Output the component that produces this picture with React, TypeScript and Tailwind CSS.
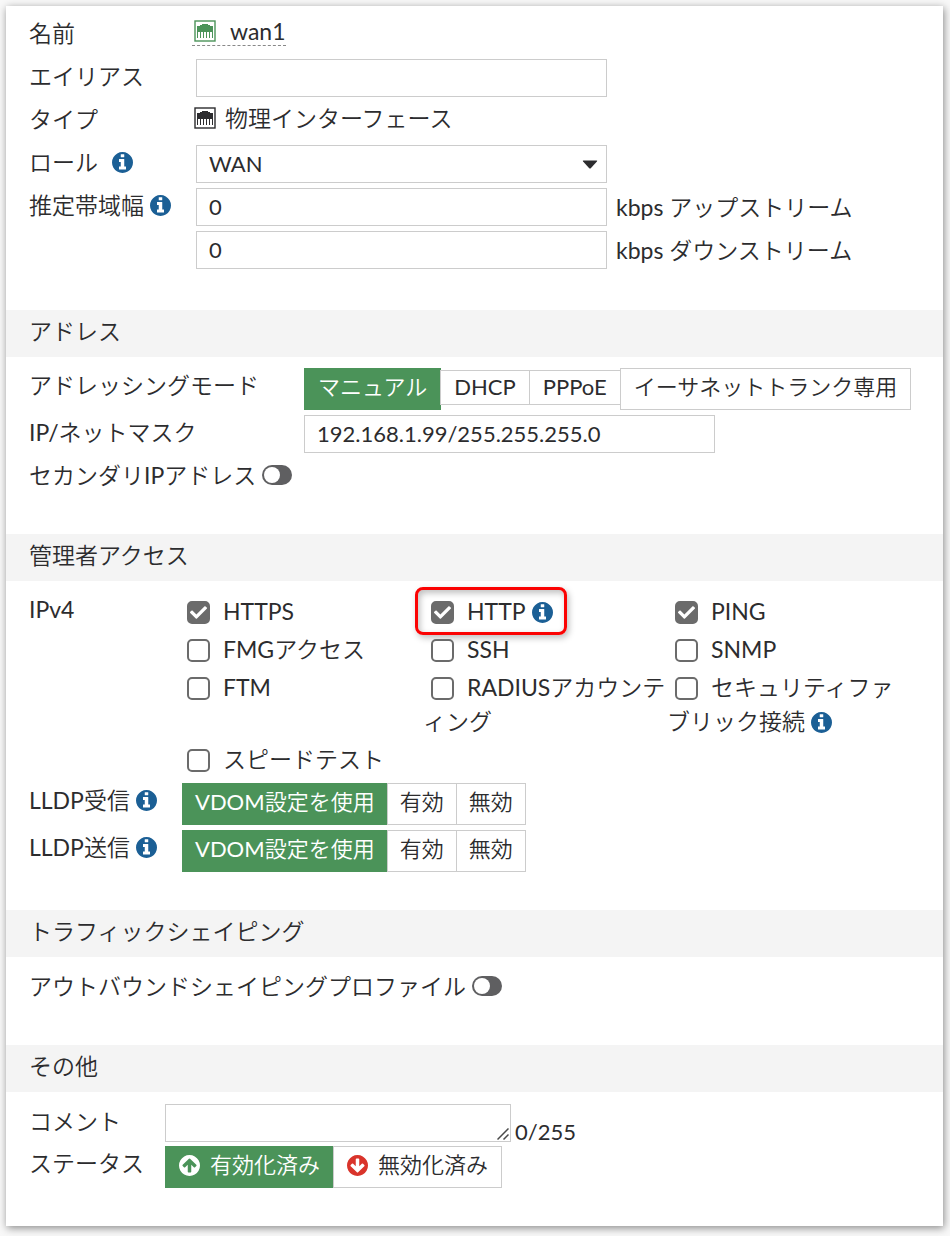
import type { ReactNode } from "react";
import { FaCheck } from "react-icons/fa";

function PortIcon({ className }: { className: string }) {
  return (
    <svg viewBox="0 0 22 22" aria-hidden="true" className={`size-[22px] shrink-0 ${className}`}>
      <rect x="1" y="1" width="20" height="20" fill="none" stroke="currentColor" strokeWidth="1.400" />
      <path
        fill="currentColor"
        d="M3 6h3V5h2V4h6v1h2v1h3v12h-1v-6h-2v6h-1v-6h-2v6h-1v-6h-2v6H9v-6H7v6H6v-6H4v6H3z"
      />
    </svg>
  );
}

function ArrowCircle({ className }: { className: string }) {
  return (
    <svg viewBox="0 0 1536 1536" aria-hidden="true" className={`size-[21px] shrink-0 fill-current ${className}`}>
      <path d="M1284 767q0-27-18-45l-362-362-91-91q-18-18-45-18t-45 18l-91 91-362 362q-18 18-18 45t18 45l91 91q18 18 45 18t45-18l189-189v502q0 26 19 45t45 19h128q26 0 45-19t19-45v-502l189 189q19 19 45 19t45-19l91-91q18-18 18-45zm252 1q0 209-103 385.500t-279.500 279.500-385.500 103-385.500-103-279.500-279.500-103-385.500 103-385.500 279.500-279.500 385.500-103 385.500 103 279.500 279.500 103 385.500z" />
    </svg>
  );
}

function Info({ label }: { label: string }) {
  return (
    <button type="button" aria-label={label} className="inline-flex align-[-3px] text-[#1b5f95]">
      <svg viewBox="0 0 1536 1536" aria-hidden="true" className="size-[21px] fill-current">
        <path d="M1024 1248v-160q0-14-9-23t-23-9h-96v-512q0-14-9-23t-23-9h-320q-14 0-23 9t-9 23v160q0 14 9 23t23 9h96v320h-96q-14 0-23 9t-9 23v160q0 14 9 23t23 9h448q14 0 23-9t9-23zm-128-896v-160q0-14-9-23t-23-9h-192q-14 0-23 9t-9 23v160q0 14 9 23t23 9h192q14 0 23-9t9-23zm640 416q0 209-103 385.500t-279.500 279.500-385.500 103-385.500-103-279.500-279.500-103-385.500 103-385.500 279.500-279.500 385.500-103 385.500 103 279.500 279.500 103 385.500z" />
      </svg>
    </button>
  );
}

function SectionTitle({ children }: { children: ReactNode }) {
  return (
    <h2 className="h-[47px] bg-[#f4f4f4] px-[23px] pb-1 leading-[43px]">{children}</h2>
  );
}

function Row({
  width,
  label,
  children,
}: {
  width: string;
  label: ReactNode;
  children?: ReactNode;
}) {
  return (
    <div className="flex min-h-[38px] items-start">
      <div className={`${width} flex shrink-0 items-center gap-[6px] whitespace-nowrap leading-[34px]`}>
        {label}
      </div>
      {children}
    </div>
  );
}

const field =
  "h-[38px] w-[411px] max-w-full border border-[#cccccc] bg-white px-3 pb-[2px] text-[22px] outline-none";

type Option = { text: string; latin?: boolean; icon?: ReactNode };

function Segmented({
  label,
  options,
  compact = false,
}: {
  label: string;
  options: Option[];
  compact?: boolean;
}) {
  return (
    <div role="group" aria-label={label} className="flex items-baseline text-[22px]">
      {options.map((option, i) => (
        <button
          key={option.text}
          type="button"
          aria-pressed={i === 0}
          className={`inline-flex items-center gap-[10px] whitespace-nowrap border leading-[30px] ${
            option.latin ? "h-[35px]" : "h-[42px] pb-1"
          } ${compact ? "px-3" : "px-[13px]"} ${
            i === 0
              ? "border-[#4b9359] bg-[#4b9359] text-white"
              : "-ml-px border-[#cccccc] bg-white"
          }`}
        >
          {option.icon}
          {option.text}
        </button>
      ))}
    </div>
  );
}

function Toggle({ id }: { id: string }) {
  return (
    <span className="relative inline-flex">
      <input
        id={id}
        type="checkbox"
        role="switch"
        className="peer h-5 w-[30px] appearance-none rounded-full bg-[#5f5f61]"
      />
      <span className="pointer-events-none absolute left-[2px] top-[2px] size-4 rounded-full bg-white peer-checked:left-3" />
    </span>
  );
}

function Access({
  text,
  checked = false,
  info = false,
  highlight = false,
}: {
  text: string;
  checked?: boolean;
  info?: boolean;
  highlight?: boolean;
}) {
  return (
    <div>
      <span className={highlight ? "relative inline-block" : ""}>
        <label>
          <span className="relative ml-2 mr-[13px] inline-block size-[23px] align-[-4px]">
            <input
              type="checkbox"
              defaultChecked={checked}
              className="peer block size-[23px] appearance-none rounded-[5px] border-2 border-[#6b6b6b] bg-white checked:bg-[#6b6b6b]"
            />
            <FaCheck className="pointer-events-none absolute left-[3px] top-[3px] hidden size-[17px] text-white peer-checked:block" />
          </span>
          {text}
        </label>
        {info && (
          <span className="ml-[6px]">
            <Info label={`${text}の説明`} />
          </span>
        )}
        {highlight && (
          <span className="pointer-events-none absolute -inset-y-[7px] -left-2 -right-[14px] rounded-lg border-[3px] border-[#fb0303] shadow-[2px_3px_6px_rgba(0,0,0,0.25),inset_2px_3px_6px_rgba(0,0,0,0.25)]" />
        )}
      </span>
    </div>
  );
}

const lldpOptions: Option[] = [{ text: "VDOM設定を使用" }, { text: "有効" }, { text: "無効" }];

export default function App() {
  return (
    <div
      lang="ja"
      className="bg-[#f8f8f8] px-[6px] pb-[10px] pt-[6px] font-['Lato','Noto_Sans_CJK_JP_DemiLight','Noto_Sans_CJK_JP_Light','Noto_Sans_CJK_JP',sans-serif] text-[23px] text-[#2c2c2e]"
    >
      <main className="mr-px bg-white shadow-[1px_2px_8px_rgba(0,0,0,0.45)]">
        <section className="flex flex-col gap-[5px] px-[23px] pb-[41px] pt-[10px]">
          <Row width="w-[163px]" label="名前">
            <button
              type="button"
              className="flex h-[30px] items-center gap-[14px] border-b border-dashed border-[#888888] pl-[2px] leading-[28px]"
            >
              <PortIcon className="text-[#4b9359]" />
              wan1
            </button>
          </Row>
          <Row width="w-[167px]" label={<label htmlFor="alias">エイリアス</label>}>
            <input id="alias" type="text" className={field} />
          </Row>
          <Row width="w-[165px]" label="タイプ">
            <span className="flex items-center gap-[9px] leading-[32px]">
              <PortIcon className="text-[#2c2c2e]" />
              物理インターフェース
            </span>
          </Row>
          <Row
            width="w-[167px]"
            label={
              <>
                <label htmlFor="role" className="mr-2">
                  ロール
                </label>
                <Info label="ロールの説明" />
              </>
            }
          >
            <div className="relative max-w-full">
              <select id="role" className={`${field} appearance-none`}>
                <option>WAN</option>
              </select>
              <svg
                viewBox="0 0 16 9"
                aria-hidden="true"
                className="pointer-events-none absolute right-[9px] top-[15px] h-[9px] w-4 fill-[#2c2c2e]"
              >
                <path d="M1.500 0.500h13q1.300 0 .4 1L9 8q-1 1-2 0L1.100 1.500q-.9-1 .4-1z" />
              </svg>
            </div>
          </Row>
          <Row
            width="w-[167px]"
            label={
              <>
                <label htmlFor="up">推定帯域幅</label>
                <Info label="推定帯域幅の説明" />
              </>
            }
          >
            <input id="up" type="text" defaultValue="0" className={field} />
            <label htmlFor="up" className="ml-[9px] whitespace-nowrap leading-[38px]">
              kbps アップストリーム
            </label>
          </Row>
          <Row width="w-[167px]" label={null}>
            <input id="down" type="text" defaultValue="0" className={field} />
            <label htmlFor="down" className="ml-[9px] whitespace-nowrap leading-[38px]">
              kbps ダウンストリーム
            </label>
          </Row>
        </section>

        <SectionTitle>アドレス</SectionTitle>
        <section className="flex flex-col gap-[5px] px-[23px] pb-[38px] pt-[11px]">
          <Row width="w-[275px]" label="アドレッシングモード">
            <Segmented
              label="アドレッシングモード"
              options={[
                { text: "マニュアル" },
                { text: "DHCP", latin: true },
                { text: "PPPoE", latin: true },
                { text: "イーサネットトランク専用" },
              ]}
            />
          </Row>
          <Row width="w-[275px]" label={<label htmlFor="ip">IP/ネットマスク</label>}>
            <input id="ip" type="text" defaultValue="192.168.1.99/255.255.255.0" className={field} />
          </Row>
          <Row
            width="w-auto"
            label={
              <>
                <label htmlFor="secondary">セカンダリIPアドレス</label>
                <Toggle id="secondary" />
              </>
            }
          />
        </section>

        <SectionTitle>管理者アクセス</SectionTitle>
        <section className="px-[23px] pb-[38px] pt-[11px]">
          <div className="flex items-start leading-[34px]">
            <div className="w-[150px] shrink-0">IPv4</div>
            <div className="mr-[9px] grid flex-1 grid-cols-3 gap-y-1 pt-[2px]">
              <Access text="HTTPS" checked />
              <Access text="HTTP" checked info highlight />
              <Access text="PING" checked />
              <Access text="FMGアクセス" />
              <Access text="SSH" />
              <Access text="SNMP" />
              <Access text="FTM" />
              <Access text="RADIUSアカウンティング" />
              <Access text="セキュリティファブリック接続" info />
              <Access text="スピードテスト" />
            </div>
          </div>
          <div className="mt-[7px] flex flex-col gap-[5px]">
            <Row
              width="w-[153px]"
              label={
                <>
                  LLDP受信
                  <Info label="LLDP受信の説明" />
                </>
              }
            >
              <Segmented compact label="LLDP受信" options={lldpOptions} />
            </Row>
            <Row
              width="w-[153px]"
              label={
                <>
                  LLDP送信
                  <Info label="LLDP送信の説明" />
                </>
              }
            >
              <Segmented compact label="LLDP送信" options={lldpOptions} />
            </Row>
          </div>
        </section>

        <SectionTitle>トラフィックシェイピング</SectionTitle>
        <section className="px-[23px] pb-[38px] pt-3">
          <Row
            width="w-auto"
            label={
              <>
                <label htmlFor="shaping">アウトバウンドシェイピングプロファイル</label>
                <Toggle id="shaping" />
              </>
            }
          />
        </section>

        <SectionTitle>その他</SectionTitle>
        <section className="flex flex-col gap-1 px-[23px] pb-[38px] pt-3">
          <Row width="w-[136px]" label={<label htmlFor="comment">コメント</label>}>
            <div className="relative flex">
              <textarea
                id="comment"
                rows={1}
                className="block h-[38px] w-[346px] resize-none border border-[#cccccc] bg-white px-3 outline-none"
              />
              <svg
                viewBox="0 0 12 12"
                aria-hidden="true"
                className="pointer-events-none absolute bottom-[2px] right-[2px] size-3 stroke-[#4a4a4a]"
              >
                <path d="M0.500 11.500L11.500 0.500M6.500 11.500L11.500 6.500" fill="none" strokeWidth="1.500" />
              </svg>
            </div>
            <span className="ml-1 self-end text-[22px] leading-[20px]">0/255</span>
          </Row>
          <Row width="w-[136px]" label="ステータス">
            <Segmented
              label="ステータス"
              options={[
                { text: "有効化済み", icon: <ArrowCircle className="text-white" /> },
                { text: "無効化済み", icon: <ArrowCircle className="rotate-180 text-[#d9342b]" /> },
              ]}
            />
          </Row>
        </section>
      </main>
    </div>
  );
}
